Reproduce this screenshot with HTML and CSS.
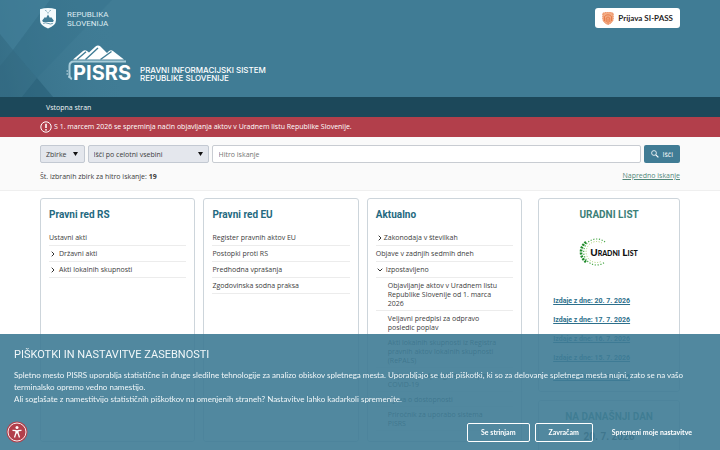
FILE: index.html
```html
<!DOCTYPE html>
<html lang="sl">
<head>
<meta charset="utf-8">
<title>PISRS</title>
<link rel="stylesheet" href="styles.css">
</head>
<body>
<header class="header">
  <svg class="header-pattern" viewBox="0 0 120 97" aria-hidden="true">
    <defs>
      <linearGradient id="fade" x1="0" y1="0.6" x2="1" y2="0.4"><stop offset="0" stop-color="#2f667e" stop-opacity=".6"/><stop offset="1" stop-color="#407c95" stop-opacity="0"/></linearGradient>
    </defs>
    <path d="M0 0H120V97H0Z" fill="url(#fade)"/>
    <path d="M0 0H50L13 50L0 34Z" fill="#427f98" opacity=".7"/>
    <path d="M50 0H112L37 78L13 50Z" fill="#35708a" opacity=".35"/>
    <path d="M0 66L13 50L37 78L22 97H0Z" fill="#2d647c" opacity=".3"/>
    <path d="M22 97L37 78L53 97Z" fill="#245a72" opacity=".5"/>
  </svg>
  <div class="container">
    <div class="header-top">
      <a class="state" href="#">
        <svg class="coat" viewBox="0 0 16 21" aria-hidden="true">
          <path d="M0 1.200Q8-1.200 16 1.200V12Q16 17.500 8 20.500Q0 17.500 0 12Z" fill="#f4fafc"/>
          <path d="M2.200 12.500L5 9L6 10L8 6.500L10 10L11 9L13.800 12.500L13 14H3Z" fill="#407c95"/>
          <path d="M3.200 15.400Q5.500 14.200 8 15.400T12.800 15.400" fill="none" stroke="#407c95" stroke-width=".8"/>
          <path d="M5.500 2.200l1 1.200M10.500 2.200l-1 1.200M8 4.200v1.200" stroke="#407c95" stroke-width=".9"/>
        </svg>
        <span>REPUBLIKA<br>SLOVENIJA</span>
      </a>
      <button class="login" type="button">
        <svg class="login-icon" viewBox="0 0 12 13" aria-hidden="true">
          <path d="M.8 1.200Q6-.6 11.200 1.200V7Q11 10.500 6 12.600Q1 10.500 .8 7Z" fill="#f3ad86" stroke="#e87a45" stroke-width=".8" stroke-dasharray="1.400 .5"/>
          <path d="M2.500 9V4.500Q6 1 9.500 4.500V9M4.200 10V6Q6 3.800 7.800 6V10M6 6.500V11.500" fill="none" stroke="#e26a35" stroke-width=".7"/>
        </svg>
        Prijava SI-PASS
      </button>
    </div>
    <a class="brand" href="#">
      <span class="logo">
        <svg class="logo-peaks" viewBox="0 0 64 36" aria-hidden="true">
          <path d="M7 14.500L17 6Q19 4.400 21 6L23 7.500L29.500 1.500Q32 -.3 34.500 1.500L41 8L43 6Q45 4.400 47 6L58 14.500Z" fill="#fff"/>
          <path d="M11 14.500L20 6.700M19.500 14.500L32 3M34.500 14.500L45.500 6.500" stroke="#407c95" stroke-width="1.400" fill="none"/>
          <path d="M60 16.500H8Q3.500 16.500 3.500 21V30Q3.500 33 6 34" fill="none" stroke="#a9cdda" stroke-width="2"/>
          <path d="M.5 26h1.500M.5 29h1.500M2 32h1.500" stroke="#d6e8ee" stroke-width="1.200"/>
        </svg>
        <span class="logo-word">PISRS</span>
      </span>
      <span class="brand-name">PRAVNI INFORMACIJSKI SISTEM<br>REPUBLIKE SLOVENIJE</span>
    </a>
  </div>
</header>
<nav class="nav"><div class="container"><a href="#">Vstopna stran</a></div></nav>
<div class="alert"><div class="container alert-row">
  <svg class="alert-icon" viewBox="0 0 12 12" aria-hidden="true"><circle cx="6" cy="6" r="5.200" fill="none" stroke="#fff"/><path d="M6 2.800V7" stroke="#fff" stroke-width="1.600"/><circle cx="6" cy="8.800" r=".9" fill="#fff"/></svg>
  <span class="alert-text">S 1. marcem 2026 se spreminja način objavljanja aktov v Uradnem listu Republike Slovenije.</span>
</div></div>
<section class="search"><div class="container">
  <form class="search-row">
    <button class="dropdown" type="button">Zbirke <svg class="arrow" viewBox="0 0 5 4" aria-hidden="true"><path d="M0 0H5L2.500 4Z"/></svg></button>
    <div class="select-wrap">
      <select class="scope" aria-label="Obseg iskanja"><option>Išči po celotni vsebini</option></select>
      <svg class="arrow select-arrow" viewBox="0 0 5 4" aria-hidden="true"><path d="M0 0H5L2.500 4Z"/></svg>
    </div>
    <input class="query" type="text" placeholder="Hitro iskanje" aria-label="Hitro iskanje">
    <button class="submit" type="submit"><svg class="lens" viewBox="0 0 8 8" aria-hidden="true"><circle cx="3" cy="3" r="2.400" fill="none" stroke="#fff" stroke-width=".8"/><path d="M4.800 4.800L7.400 7.400" stroke="#fff" stroke-width="1.200"/></svg>Išči</button>
  </form>
  <div class="search-info">
    <span class="count">Št. izbranih zbirk za hitro iskanje: <b>19</b></span>
    <a class="advanced" href="#">Napredno iskanje</a>
  </div>
</div></section>
<main class="container columns">
  <div class="cards">
    <section class="card">
      <h2>Pravni red RS</h2>
      <ul class="list">
        <li>Ustavni akti</li>
        <li><svg class="chev" viewBox="0 0 4 6" aria-hidden="true"><path d="M.7.700L3 3L.7 5.300"/></svg>Državni akti</li>
        <li><svg class="chev" viewBox="0 0 4 6" aria-hidden="true"><path d="M.7.700L3 3L.7 5.300"/></svg>Akti lokalnih skupnosti</li>
      </ul>
    </section>
    <section class="card">
      <h2>Pravni red EU</h2>
      <ul class="list">
        <li>Register pravnih aktov EU</li>
        <li>Postopki proti RS</li>
        <li>Predhodna vprašanja</li>
        <li>Zgodovinska sodna praksa</li>
      </ul>
    </section>
    <section class="card">
      <h2>Aktualno</h2>
      <ul class="list">
        <li><svg class="chev tight" viewBox="0 0 4 6" aria-hidden="true"><path d="M.7.700L3 3L.7 5.300"/></svg>Zakonodaja v številkah</li>
        <li>Objave v zadnjih sedmih dneh</li>
        <li><svg class="chev-down" viewBox="0 0 6 4" aria-hidden="true"><path d="M.7.700L3 3L5.300.700"/></svg>Izpostavljeno</li>
      </ul>
      <ul class="list sublist">
        <li>Objavljanje aktov v Uradnem listu Republike Slovenije od 1. marca 2026</li>
        <li>Veljavni predpisi za odpravo posledic poplav</li>
        <li>Akti lokalnih skupnosti iz Registra pravnih aktov lokalnih skupnosti (RePALS)</li>
        <li>Veljavni predpisi glede ukrepov COVID-19</li>
        <li>Izjava o dostopnosti</li>
        <li>Priročnik za uporabo sistema PISRS</li>
      </ul>
    </section>
  </div>
  <aside class="side">
    <section class="card gazette">
      <h2 class="side-title">URADNI LIST</h2>
      <div class="gazette-logo">
        <svg class="ring" viewBox="0 0 30 30" aria-hidden="true">
          <path class="dots" d="M26 5A13 13 0 1 0 26 25"/>
          <path class="dots-bold" d="M7 5A12.500 12.500 0 0 0 7 25"/>
          <path class="dots-light" d="M23 6A10.500 10.500 0 1 0 23 24"/>
        </svg>
        <span class="gazette-name">Uradni List</span>
      </div>
      <ul class="issues">
        <li><a href="#">Izdaje z dne: 20. 7. 2026</a></li>
        <li><a href="#">Izdaje z dne: 17. 7. 2026</a></li>
        <li><a href="#">Izdaje z dne: 16. 7. 2026</a></li>
        <li><a href="#">Izdaje z dne: 15. 7. 2026</a></li>
        <li><a href="#">Izdaje z dne: 14. 7. 2026</a></li>
      </ul>
    </section>
    <section class="card today">
      <h2 class="side-title">NA DANAŠNJI DAN</h2>
      <p class="today-date">20. 7. 2026</p>
    </section>
  </aside>
</main>
<div class="cookies" role="dialog" aria-labelledby="cookies-title">
  <h2 id="cookies-title">PIŠKOTKI IN NASTAVITVE ZASEBNOSTI</h2>
  <p>Spletno mesto PISRS uporablja statistične in druge sledilne tehnologije za analizo obiskov spletnega mesta. Uporabljajo se tudi piškotki, ki so za delovanje spletnega mesta nujni, zato se na vašo terminalsko opremo vedno namestijo.<br>Ali soglašate z namestitvijo statističnih piškotkov na omenjenih straneh? Nastavitve lahko kadarkoli spremenite.</p>
  <div class="cookie-actions">
    <button type="button">Se strinjam</button>
    <button type="button">Zavračam</button>
    <button class="plain" type="button">Spremeni moje nastavitve</button>
  </div>
</div>
<button class="access" type="button" aria-label="Dostopnost">
  <svg viewBox="0 0 22 22" aria-hidden="true"><circle cx="11" cy="11" r="10.500" fill="#b23f4b"/><circle cx="11" cy="11" r="9" fill="none" stroke="#fff" stroke-width=".9"/><circle cx="11" cy="6.500" r="1.500" fill="#fff"/><path d="M6.500 9.300L10 9.700V12L8.500 16.500M15.500 9.300L12 9.700V12L13.500 16.500M11 9.500V12.500" fill="none" stroke="#fff" stroke-width="1.300"/></svg>
</button>
</body>
</html>
```
FILE: styles.css
```css
* { box-sizing: border-box; }
html, body { height: 100%; overflow: hidden; }
body { margin: 0; background: #fff; color: #3c3c3c; font: 7px/9px "Open Sans", sans-serif; }
button, input, select { font: inherit; color: inherit; }
ul { list-style: none; margin: 0; padding: 0; }
h2, p { margin: 0; }
svg { flex: none; }
.container { padding: 0 40px; }
.header { position: relative; height: 97px; padding-top: 8px; background: #407c95; color: #fff; }
.header-pattern { position: absolute; left: 0; top: 0; width: 120px; height: 97px; }
.header .container { position: relative; }
.header-top { display: flex; justify-content: space-between; align-items: flex-start; }
.state { display: flex; gap: 11px; align-items: center; color: #deebf0; text-decoration: none; font: 8px/9px Roboto, sans-serif; }
.coat { width: 16px; height: 21px; }
.login { display: flex; align-items: center; gap: 4px; height: 20px; padding: 0 7px; border: 0; border-radius: 3px; background: #fff; color: #1f2426; font: 700 8px/9px Lato, sans-serif; }
.login-icon { width: 12px; height: 13px; }
.brand { display: flex; align-items: flex-end; gap: 9px; margin: 16px 0 0 26px; color: #fff; text-decoration: none; }
.logo { position: relative; display: block; width: 65px; height: 37px; }
.logo-peaks { width: 64px; height: 36px; }
.logo-word { position: absolute; right: 0; bottom: 0; font: 700 20px/18px Inter, sans-serif; }
.brand-name { font: 500 8px/8px Inter, sans-serif; }
.nav { background: #1c485a; color: #fff; }
.nav a { display: block; padding: 6px 6px 5px; color: #f0f4f6; text-decoration: none; }
.alert { background: #b23f4b; color: #fff; }
.alert-row { display: flex; align-items: center; gap: 2px; height: 20px; }
.alert-icon { width: 12px; height: 12px; }
.alert-text { padding-bottom: 2px; }
.search { padding: 8px 0; height: 54px; background: #fafafa; border-bottom: 1px solid #efefef; }
.search-row { display: flex; gap: 3px; height: 18px; margin: 0; }
.dropdown, .scope { border: 1px solid #c3c9d2; border-radius: 2px; background: #e4e7ed; height: 18px; }
.dropdown { display: flex; align-items: center; gap: 6px; padding: 0 6px 0 5px; }
.arrow { width: 5px; height: 4px; fill: #111; }
.select-wrap { position: relative; flex: 0 0 121px; }
.scope { appearance: none; width: 100%; padding: 0 5px; }
.select-arrow { position: absolute; right: 6px; top: 7px; }
.query { flex: 1; min-width: 0; padding: 0 6px; border: 1px solid #c8ccd2; border-radius: 2px; background: #fff; }
.query::placeholder { color: #757575; }
.submit { display: flex; align-items: center; gap: 4px; padding: 0 7px; border: 0; border-radius: 2px; background: #407c95; color: #fff; }
.lens { width: 8px; height: 8px; }
.search-info { display: flex; justify-content: space-between; padding-top: 8px; }
.count { padding-top: 1px; }
.advanced { color: #52887a; }
.columns { display: grid; grid-template-columns: 17fr 5fr; gap: 16px; padding-top: 7px; }
.cards { display: grid; grid-template-columns: repeat(3, 1fr); gap: 8px; height: 244px; }
.card { border: 1px solid #cdd5db; border-radius: 3px; padding: 8px; background: #fff; }
.card h2 { padding-bottom: 7px; color: #24697f; font: 700 10px/16px Roboto, sans-serif; }
.list li { padding: 3px 0; border-bottom: 1px solid #ececec; }
.chev { width: 4px; height: 6px; margin: 0 4px 0 2px; vertical-align: -1px; }
.chev.tight { margin-right: 2px; }
.chev-down { width: 6px; height: 4px; margin: 0 3px 0 1px; }
.chev path, .chev-down path { fill: none; stroke: #333; }
.sublist li { padding: 3px 13px 2px 12px; }
.side { display: grid; gap: 8px; align-content: start; }
.gazette { height: 194px; }
.card .side-title { color: #3c7f78; text-align: center; }
.gazette-logo { display: flex; align-items: center; padding: 7px 0 0 32px; }
.ring { width: 30px; height: 30px; margin-right: -19px; }
.ring path { fill: none; }
.ring .dots { stroke: #4aa84a; stroke-width: 1.200; stroke-dasharray: 1.200 1.600; }
.ring .dots-bold { stroke: #1f8a2a; stroke-width: 2.600; stroke-dasharray: 2 1; }
.ring .dots-light { stroke: #a5cf6a; stroke-width: 1; stroke-dasharray: 1 1.600; }
.gazette-name { color: #111; font: 900 10px/10px Lato, sans-serif; font-variant: small-caps; }
.issues { padding: 29px 6px 0; }
.issues li { padding-bottom: 9px; }
.issues a { color: #2c6f8b; font-family: Roboto, sans-serif; font-weight: 700; }
.today-date { text-align: center; font: 700 10px/9px Roboto, sans-serif; }
.today { height: 80px; }
.cookies { position: fixed; left: 0; right: 0; bottom: 0; padding: 14px; height: 116px; background: rgba(64, 124, 149, .91); color: #f1f7f9; }
.cookies h2 { font: 400 11px/14px Roboto, sans-serif; }
.cookies p { padding-top: 7px; font: 8px/12px Lato, sans-serif; }
.cookie-actions { display: flex; justify-content: flex-end; gap: 5px; padding-top: 18px; }
.cookie-actions button { height: 19px; padding: 0 13px; border: 1px solid #fff; border-radius: 2px; background: transparent; font: 700 7px/9px Lato, sans-serif; color: #fff; }
.cookie-actions .plain { border-color: transparent; }
.access { position: fixed; left: 6px; bottom: 7px; width: 22px; height: 22px; padding: 0; border: 0; background: none; }
.access svg { display: block; }
```
